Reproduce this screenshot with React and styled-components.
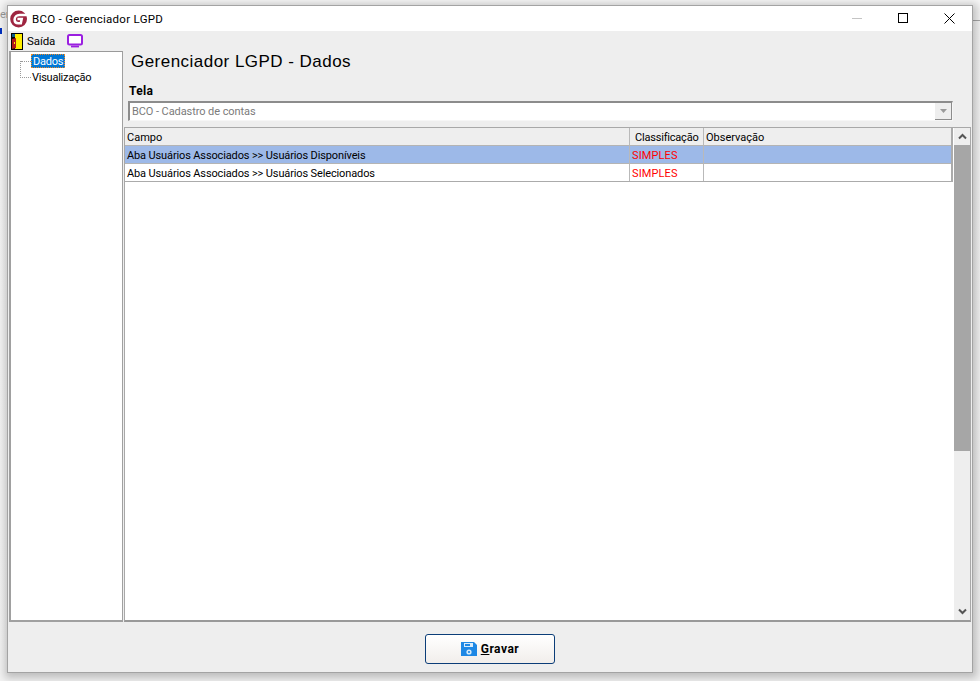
import React from "react";
import styled, { createGlobalStyle } from "styled-components";

const Global = createGlobalStyle`
  html, body { margin: 0; padding: 0; background: #f4f4f4; }
  * { box-sizing: border-box; }
  #root { font-family: Roboto, "Liberation Sans", Arial, sans-serif; font-size: 11px; color: #000; }
`;

const Desktop = styled.div`
  position: relative;
  width: 980px;
  height: 681px;
  padding: 5px 8px 8px 7px;
  overflow: hidden;
  background: linear-gradient(#f6f6f6, #f2f2f2);
`;
const BackText = styled.span`
  position: absolute;
  left: 0;
  top: 8px;
  color: #9a9a9a;
  font-size: 11px;
`;
const BackMark = styled.span`
  position: absolute;
  left: 0;
  top: 28px;
  width: 2px;
  height: 6px;
  background: #0030c0;
`;
const BackLine = styled.span`
  position: absolute;
  right: 0;
  top: 20px;
  width: 8px;
  height: 1px;
  background: #a8a8a8;
`;
const Window = styled.div`
  position: relative;
  width: 966px;
  height: 668px;
  display: flex;
  flex-direction: column;
  background: #eeeeee;
  border: 1px solid #a3a3a3;
  box-shadow: 1px 2px 8px 3px rgba(0, 0, 0, 0.22);
`;
const TitleBar = styled.div`
  height: 25px;
  flex: none;
  display: flex;
  align-items: center;
  padding-left: 2px;
  background: #fff;
`;
const TitleText = styled.span`
  margin-left: 4px;
  font-size: 11.5px;
  letter-spacing: 0.28px;
`;
const WinButtons = styled.div`
  margin-left: auto;
  display: flex;
  height: 100%;
  align-items: center;
`;
const WinButton = styled.div`
  width: 46px;
  height: 25px;
  display: flex;
  align-items: center;
  justify-content: center;
`;
const Toolbar = styled.div`
  height: 20px;
  flex: none;
  display: flex;
  align-items: center;
  padding-left: 3px;
  background: #eeeeee;
`;
const ToolLabel = styled.span`
  margin-left: 4px;
  margin-right: 12px;
  font-size: 11.5px;
  letter-spacing: -0.1px;
`;
const Body = styled.div`
  flex: 1;
  display: flex;
  min-height: 0;
  padding: 0 1px 0 1px;
`;
const Tree = styled.div`
  position: relative;
  width: 114px;
  flex: none;
  margin-right: 1px;
  background: #fff;
  border: 1px solid #a0a0a0;
  border-width: 1px 1px 2px 2px;
  border-top-color: #9a9a9a;
  padding: 2px 0 0 20px;
`;
const Connector = styled.span`
  position: absolute;
  left: 9px;
  top: 9px;
  width: 11px;
  height: 17px;
  border-left: 1px dotted #9a9a9a;
  border-bottom: 1px dotted #9a9a9a;
  &::before {
    content: "";
    position: absolute;
    left: 0;
    top: 0;
    width: 10px;
    border-top: 1px dotted #9a9a9a;
  }
`;
const TreeItem = styled.div`
  width: fit-content;
  height: ${(p) => (p.$selected ? "14px" : "16px")};
  line-height: ${(p) => (p.$selected ? "13px" : "18px")};
  padding: 0 1px;
  white-space: nowrap;
  letter-spacing: -0.25px;
  color: ${(p) => (p.$selected ? "#fff" : "#000")};
  background: ${(p) => (p.$selected ? "#0078d7" : "transparent")};
  border: ${(p) => (p.$selected ? "1px dotted #f08a24" : "none")};
  margin-bottom: ${(p) => (p.$selected ? "1px" : "0")};
`;
const Content = styled.div`
  flex: 1;
  min-width: 0;
  display: flex;
  flex-direction: column;
`;
const Heading = styled.h1`
  margin: 0;
  height: 21px;
  padding: 1px 0 0 7px;
  font-family: "Liberation Sans", Arial, sans-serif;
  font-size: 17px;
  line-height: 20px;
  font-weight: 400;
  letter-spacing: 0.47px;
`;
const FieldLabel = styled.div`
  margin: 12px 0 0 5px;
  height: 14px;
  line-height: 14px;
  font-weight: 700;
  font-size: 12px;
  letter-spacing: 0.35px;
`;
const Combo = styled.div`
  margin: 3px 0 6px 4px;
  width: 825px;
  height: 20px;
  display: flex;
  align-items: center;
  background: #fff;
  border-style: solid;
  border-width: 2px 1px 1px 2px;
  border-color: #8c8c8c #f6f6f6 #f6f6f6 #8c8c8c;
  color: #7b7b7b;
  padding-left: 2px;
  letter-spacing: -0.08px;
`;
const ComboArrow = styled.span`
  margin-left: auto;
  width: 17px;
  height: 17px;
  background: #eeeeee;
  border-right: 1px solid #8c8c8c;
  border-bottom: 1px solid #8c8c8c;
  display: flex;
  align-items: center;
  justify-content: center;
`;
const GridBox = styled.div`
  flex: 1;
  min-height: 0;
  display: flex;
  background: #fff;
  border: 1px solid #a8a8a8;
  border-bottom-width: 2px;
  border-bottom-color: #999;
`;
const GridArea = styled.div`
  flex: 1;
  min-width: 0;
`;
const Table = styled.div`
  display: grid;
  grid-template-columns: 505px 74px 1fr;
  border-right: 2px solid #ababab;
  border-bottom: 1px solid #ababab;
`;
const Cell = styled.div`
  height: ${(p) => (p.$noBottom ? 17 : 18)}px;
  line-height: 19px;
  padding-left: ${(p) => p.$pad || 2}px;
  white-space: nowrap;
  overflow: hidden;
  letter-spacing: ${(p) => p.$spacing || 0}px;
  border-right: ${(p) => (p.$last ? "none" : "1px solid #b9b9b9")};
  border-bottom: ${(p) => (p.$noBottom ? "none" : "1px solid #b4b4b4")};
  background: ${(p) => p.$bg || "transparent"};
  color: ${(p) => p.$color || "#000"};
`;
const Scrollbar = styled.div`
  width: 16px;
  flex: none;
  margin-left: 1px;
  background: #eeeeee;
  display: flex;
  flex-direction: column;
`;
const ScrollButton = styled.div`
  height: 17px;
  flex: none;
  display: flex;
  align-items: center;
  justify-content: center;
  margin-top: ${(p) => (p.$bottom ? "auto" : "0")};
`;
const Thumb = styled.div`
  height: 306px;
  flex: none;
  background: #a6a6a6;
`;
const Footer = styled.div`
  height: 50px;
  flex: none;
  display: flex;
  justify-content: center;
  padding-top: 12px;
`;
const SaveButton = styled.button`
  width: 130px;
  height: 30px;
  display: flex;
  align-items: center;
  justify-content: center;
  gap: 4px;
  padding: 0;
  border: 1px solid #0b3d78;
  border-radius: 3px;
  background: linear-gradient(#ffffff, #f1eeeb);
  font-family: inherit;
  font-size: 12px;
  font-weight: 700;
  letter-spacing: 0.5px;
  color: #000;
`;

const Logo = () => (
  <svg width="18" height="18" viewBox="0 0 18 18">
    <circle cx="8.6" cy="9" r="8.4" fill="#9e2540" />
    <path d="M17.6 5H9.6C6.6 5 4.6 7 4.6 9.6c0 2.2 1.4 3.7 3.5 3.7h2.7l.9-4.2H7.4" fill="none" stroke="#fff" strokeWidth="2.5" />
  </svg>
);
const Door = () => (
  <svg width="12" height="17" viewBox="0 0 12 17">
    <rect x="0" y="0" width="12" height="17" fill="#000" />
    <rect x="4" y="1" width="7" height="15" fill="#ffee00" />
    <rect x="1" y="1" width="3" height="3" fill="#0a5a8a" />
    <path d="M1 6l4-1v10l-4 1z" fill="#b01818" />
    <rect x="3" y="9" width="1" height="2" fill="#ffee00" />
  </svg>
);
const Monitor = () => (
  <svg width="16" height="14" viewBox="0 0 16 14">
    <rect x="1" y="1" width="14" height="9.5" rx="1.5" fill="#fff" stroke="#9a1fe0" strokeWidth="2" />
    <rect x="4" y="11.6" width="8" height="1.8" fill="#9a1fe0" />
  </svg>
);
const Disk = () => (
  <svg width="16" height="16" viewBox="0 0 16 16">
    <path d="M0 1h13l3 3v11H0z" fill="#1e88e5" />
    <rect x="3" y="2" width="9" height="4" fill="#d8ecfb" />
    <rect x="4" y="3" width="5" height="2" fill="#1e88e5" />
    <circle cx="8" cy="11" r="2.6" fill="#d8ecfb" />
    <circle cx="8" cy="11" r="1.1" fill="#1e88e5" />
  </svg>
);

const rows = [
  "Aba Usuários Associados >> Usuários Disponíveis",
  "Aba Usuários Associados >> Usuários Selecionados",
];

export default function App() {
  return (
    <Desktop>
      <Global />
      <BackText>er</BackText>
      <BackMark />
      <BackLine />
      <Window>
        <TitleBar>
          <Logo />
          <TitleText>BCO - Gerenciador LGPD</TitleText>
          <WinButtons>
            <WinButton>
              <svg width="11" height="11" viewBox="0 0 11 11"><path d="M0 5.5h10" stroke="#c4c4c4" /></svg>
            </WinButton>
            <WinButton>
              <svg width="11" height="11" viewBox="0 0 11 11"><rect x="0.5" y="0.5" width="9" height="9" fill="none" stroke="#000" /></svg>
            </WinButton>
            <WinButton>
              <svg width="11" height="11" viewBox="0 0 11 11"><path d="M.5.5l10 10M10.5.5l-10 10" stroke="#000" /></svg>
            </WinButton>
          </WinButtons>
        </TitleBar>
        <Toolbar>
          <Door />
          <ToolLabel>Saída</ToolLabel>
          <Monitor />
        </Toolbar>
        <Body>
          <Tree>
            <Connector />
            <TreeItem $selected>Dados</TreeItem>
            <TreeItem>Visualização</TreeItem>
          </Tree>
          <Content>
            <Heading>Gerenciador LGPD - Dados</Heading>
            <FieldLabel>Tela</FieldLabel>
            <Combo>
              BCO - Cadastro de contas
              <ComboArrow>
                <svg width="9" height="6" viewBox="0 0 9 6"><path d="M1 1h7L4.5 5z" fill="#9a9a9a" /></svg>
              </ComboArrow>
            </Combo>
            <GridBox>
              <GridArea>
                <Table>
                  <Cell $pad={2} $bg="#eeeeee">Campo</Cell>
                  <Cell $pad={5} $spacing={-0.2} $bg="#eeeeee">Classificação</Cell>
                  <Cell $pad={2} $bg="#eeeeee" $last>Observação</Cell>
                  {rows.map((r, i) => (
                    <React.Fragment key={r}>
                      <Cell $spacing={-0.13} $bg={i === 0 ? "#9db9e8" : "#fff"} $noBottom={i === 1}>{r}</Cell>
                      <Cell $pad={2} $spacing={0.12} $color="#ff0000" $bg={i === 0 ? "#9db9e8" : "#fff"} $noBottom={i === 1}>SIMPLES</Cell>
                      <Cell $bg={i === 0 ? "#9db9e8" : "#fff"} $last $noBottom={i === 1} />
                    </React.Fragment>
                  ))}
                </Table>
              </GridArea>
              <Scrollbar>
                <ScrollButton>
                  <svg width="9" height="7" viewBox="0 0 9 7"><path d="M1 5.5l3.5-3.5L8 5.5" fill="none" stroke="#555" strokeWidth="2" /></svg>
                </ScrollButton>
                <Thumb />
                <ScrollButton $bottom>
                  <svg width="9" height="7" viewBox="0 0 9 7"><path d="M1 1.5L4.5 5 8 1.5" fill="none" stroke="#555" strokeWidth="2" /></svg>
                </ScrollButton>
              </Scrollbar>
            </GridBox>
          </Content>
        </Body>
        <Footer>
          <SaveButton>
            <Disk />
            <span><u>G</u>ravar</span>
          </SaveButton>
        </Footer>
      </Window>
    </Desktop>
  );
}
